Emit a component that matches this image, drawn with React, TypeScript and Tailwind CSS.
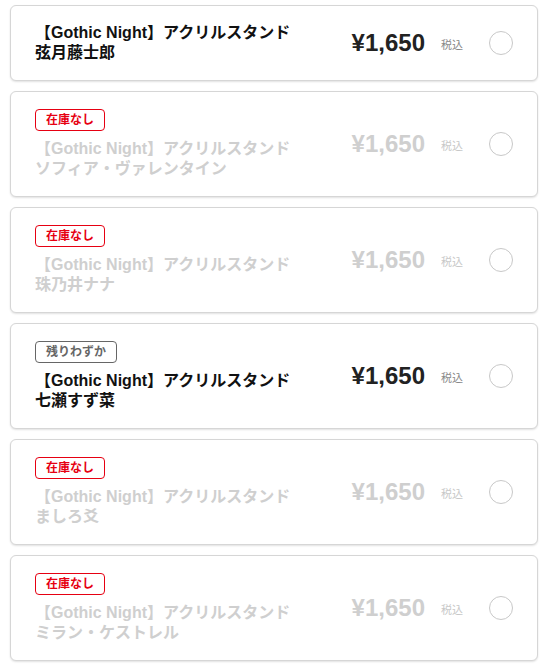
import React from "react"

type Item = {
  name: string
  price: string
  stock: "in" | "out" | "low"
}

const items: Item[] = [
  { name: "弦月藤士郎", price: "¥1,650", stock: "in" },
  { name: "ソフィア・ヴァレンタイン", price: "¥1,650", stock: "out" },
  { name: "珠乃井ナナ", price: "¥1,650", stock: "out" },
  { name: "七瀬すず菜", price: "¥1,650", stock: "low" },
  { name: "ましろ爻", price: "¥1,650", stock: "out" },
  { name: "ミラン・ケストレル", price: "¥1,650", stock: "out" },
]

function Badge({ stock }: { stock: Item["stock"] }) {
  if (stock === "out") {
    return (
      <span className="inline-flex h-[22px] w-[70px] items-center justify-center rounded-[4px] border border-[#e60012] text-[12px] font-bold text-[#e60012]">
        在庫なし
      </span>
    )
  }
  if (stock === "low") {
    return (
      <span className="inline-flex h-[22px] w-[82px] items-center justify-center rounded-[4px] border border-[#666] text-[12px] font-bold text-[#666]">
        残りわずか
      </span>
    )
  }
  return null
}

function Row({ item }: { item: Item }) {
  const disabled = item.stock === "out"
  return (
    <div className="flex items-center rounded-[6px] border border-[#d6d6d6] bg-white py-[17px] pl-[24px] pr-[24px] shadow-[0_1px_2px_rgba(0,0,0,0.12)]">
      <div className="flex flex-1 flex-col items-start gap-[8px]">
        {item.stock !== "in" && <Badge stock={item.stock} />}
        <div className={`text-[16px] font-bold leading-[20px] ${disabled ? "text-[#cfcfcf]" : "text-[#111]"}`}>
          <div>【Gothic Night】アクリルスタンド</div>
          <div>{item.name}</div>
        </div>
      </div>
      <div className={`text-[24px] font-bold leading-none ${disabled ? "text-[#cfcfcf]" : "text-[#222]"}`}>
        {item.price}
      </div>
      <div className={`ml-[16px] mt-[4px] text-[11px] ${disabled ? "text-[#c8c8c8]" : "text-[#888]"}`}>税込</div>
      <div className="ml-[26px] h-[24px] w-[24px] rounded-full border border-[#c8c8c8] bg-white" />
    </div>
  )
}

export default function App() {
  return (
    <div
      className="flex min-h-screen flex-col gap-[10px] bg-white px-[10px] pt-[5px]"
      style={{ fontFamily: '"Liberation Sans", "Noto Sans CJK JP", sans-serif' }}
    >
      {items.map((item) => (
        <Row key={item.name} item={item} />
      ))}
    </div>
  )
}
